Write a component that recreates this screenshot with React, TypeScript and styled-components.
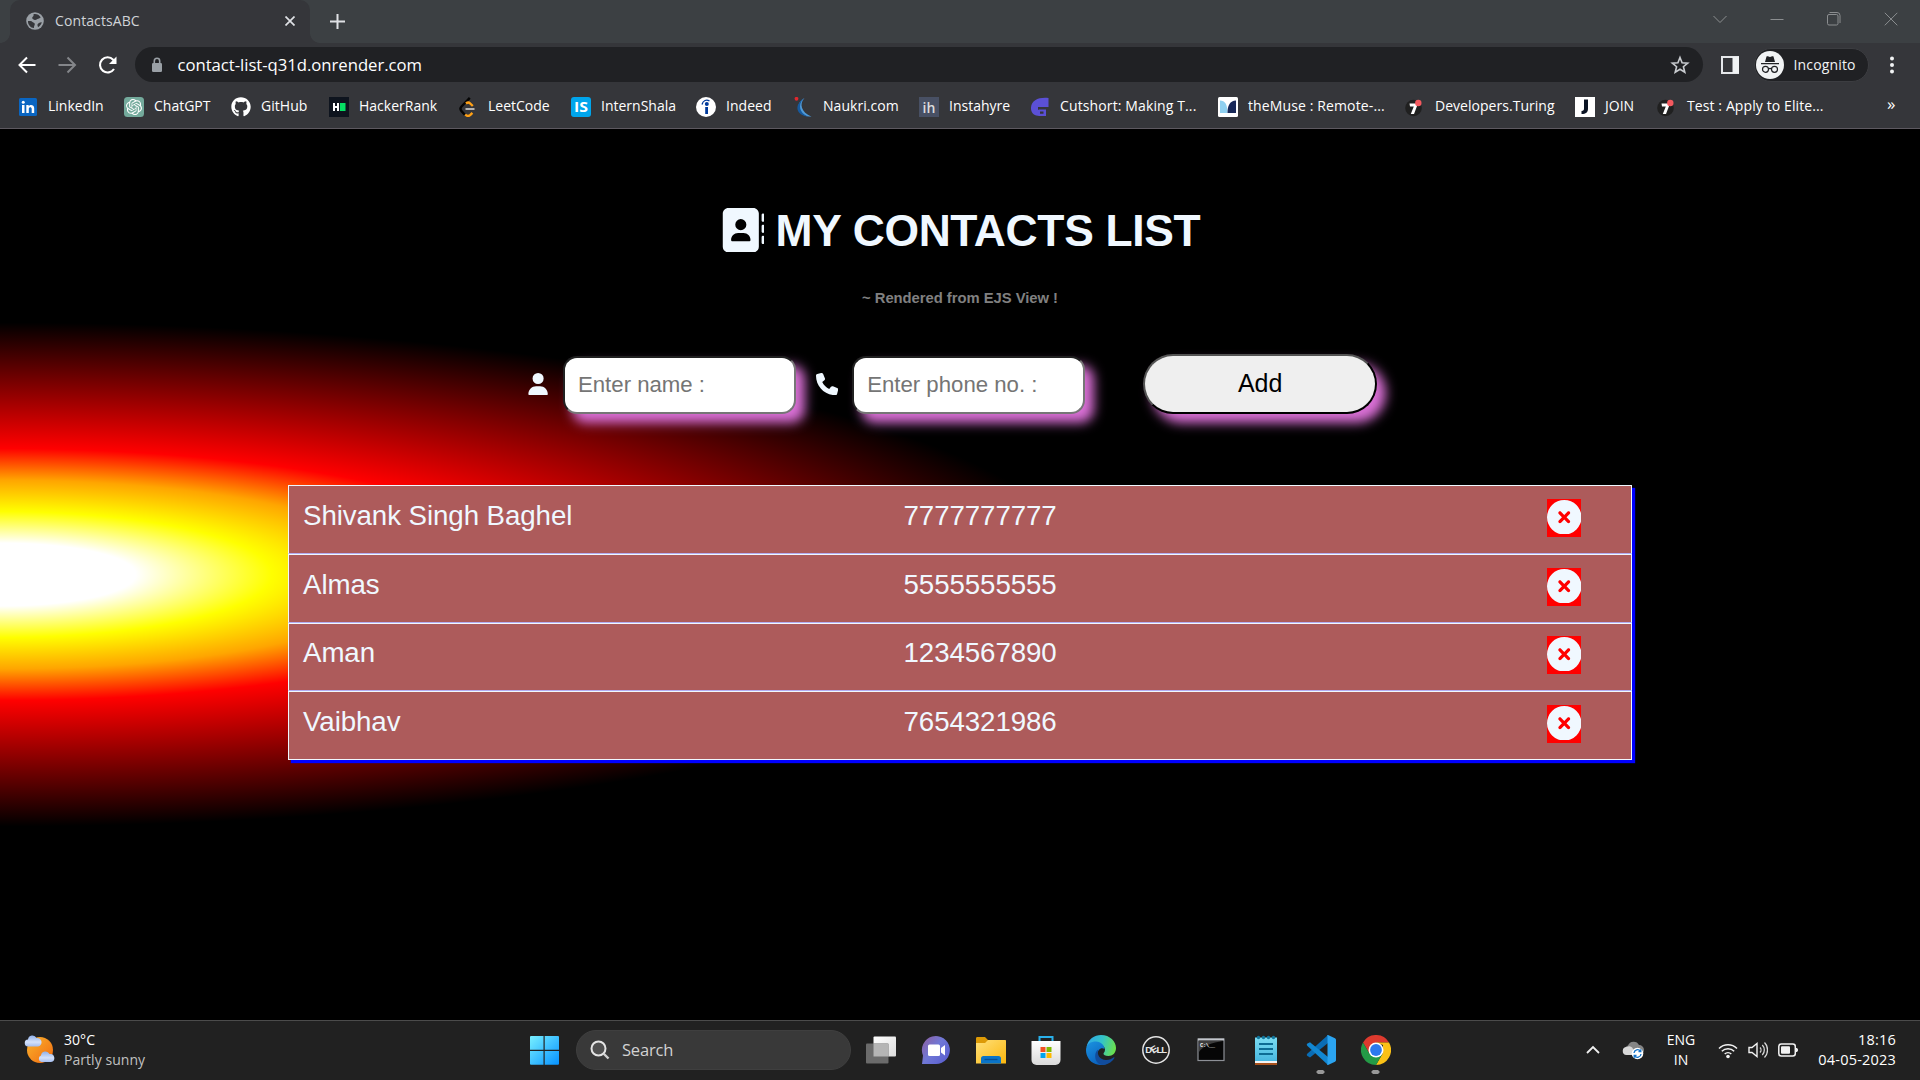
import React from "react";
import styled, { createGlobalStyle } from "styled-components";
import { FaAddressBook, FaUser, FaPhone, FaCircleXmark } from "react-icons/fa6";
import { FaGithub } from "react-icons/fa";
import { SiOpenai } from "react-icons/si";

const UI_FONT = '"Open Sans", "Noto Sans", sans-serif';
const PAGE_FONT = '"Liberation Sans", Arial, sans-serif';

const GlobalStyle = createGlobalStyle`
  * { box-sizing: border-box; }
  html, body { margin: 0; padding: 0; background: #000; overflow: hidden; }
  svg { display: block; flex: none; }
`;

const Screen = styled.div`
  width: 1920px;
  height: 1080px;
  display: flex;
  flex-direction: column;
  overflow: hidden;
  font-family: ${UI_FONT};
`;

/* ---------- browser chrome ---------- */

const TabStrip = styled.header`
  height: 43px;
  flex: none;
  display: flex;
  align-items: flex-start;
  background: #3c4043;
`;

const Flare = styled.div<{ $side: "left" | "right" }>`
  width: 10px;
  height: 43px;
  background: radial-gradient(circle at ${(p) => (p.$side === "left" ? "0 0" : "10px 0")}, #3c4043 9.5px, #35363a 10.2px)
    no-repeat 0 33px / 10px 10px;
`;

const Tab = styled.div`
  width: 300px;
  height: 43px;
  display: flex;
  align-items: center;
  padding: 0 15px 1px 16px;
  border-radius: 10px 10px 0 0;
  background: #35363a;
`;

const TabTitle = styled.span`
  flex: 1;
  margin-left: 11px;
  color: #d0d3d7;
  font-size: 14px;
  letter-spacing: 0.1px;
  line-height: 20px;
`;

const NewTab = styled.div`
  margin: 14px 0 0 10px;
`;

const WindowControls = styled.div`
  height: 37px;
  margin-left: auto;
  padding-right: 22px;
  display: flex;
  align-items: center;
  gap: 43px;
`;

const Toolbar = styled.div`
  height: 43px;
  flex: none;
  display: flex;
  align-items: center;
  padding: 0 20px 0 17px;
  background: #35363a;
`;

const NavButtons = styled.div`
  width: 118px;
  display: flex;
  gap: 20px;
`;

const AddressBar = styled.div`
  width: 1568px;
  height: 35px;
  display: flex;
  align-items: center;
  padding: 0 13px 0 16px;
  border-radius: 18px;
  background: #202124;
`;

const Url = styled.span`
  flex: 1;
  padding-top: 1px;
  margin-left: 14.5px;
  color: #fff;
  font-size: 16.7px;
  letter-spacing: -0.03px;
  line-height: 24px;
`;

const PanelButton = styled.div`
  margin: 0 15px 0 18px;
`;

const IncognitoChip = styled.div`
  width: 115px;
  height: 34px;
  display: flex;
  align-items: center;
  padding-left: 1px;
  border: 1px solid #3c3d41;
  border-radius: 17px;
  background: #202124;
  color: #f1f3f4;
  font-size: 14px;
  letter-spacing: 0.15px;
  span { margin-left: 9.5px; line-height: 20px; }
`;

const MenuButton = styled.div`
  margin-left: 21px;
`;

const BookmarksBar = styled.nav`
  height: 43px;
  flex: none;
  display: flex;
  align-items: center;
  padding: 0 0 1px 18px;
  border-bottom: 1px solid #5d5960;
  background: #35363a;
`;

const Bookmark = styled.div<{ $width: number }>`
  width: ${(p) => p.$width}px;
  flex: none;
  display: flex;
  align-items: center;
  white-space: nowrap;
`;

const BookmarkLabel = styled.span<{ $track: number }>`
  margin: 0 0 2px 10px;
  color: #fff;
  font-size: 14px;
  line-height: 20px;
  letter-spacing: ${(p) => p.$track}px;
`;

const Overflow = styled.span`
  color: #fff;
  font-size: 17px;
  line-height: 20px;
  margin: -6px 0 0 1px;
`;

/* ---------- contacts page ---------- */

const Page = styled.main`
  height: 891px;
  flex: none;
  display: flex;
  flex-direction: column;
  align-items: center;
  padding-top: 77px;
  font-family: ${PAGE_FONT};
  color: aliceblue;
  background: radial-gradient(at left, white 5%, yellow 10%, orange 15%, red 20%, black 40%);
`;

const Title = styled.h1`
  margin: 0;
  display: flex;
  align-items: center;
  gap: 11.5px;
  font-size: 44.4px;
  line-height: 50px;
  font-weight: bold;
  white-space: nowrap;
  letter-spacing: -0.32px;
  svg { margin-bottom: 2px; }
`;

const Subtitle = styled.h5`
  margin: 32px 0 0;
  font-size: 14.8px;
  line-height: 20px;
  letter-spacing: -0.03px;
  color: gray;
`;

const Form = styled.form`
  width: 1920px;
  height: 60px;
  margin: 46px 0 0;
  padding-left: 527.3px;
  display: flex;
  align-items: flex-end;
`;

const FieldIcon = styled.span<{ $gap: number; $before?: number }>`
  display: flex;
  margin: 0 ${(p) => p.$gap}px 19px ${(p) => p.$before ?? 0}px;
  font-size: 22.2px;
`;

const Field = styled.input`
  width: 233px;
  height: 58px;
  margin: 0;
  padding: 0 13px;
  border: 2px inset rgb(118, 118, 118);
  border-radius: 14px;
  background: #fff;
  font: 22.2px ${PAGE_FONT};
  box-shadow: 9px 9px 12px orchid;
  &::placeholder { color: #757575; opacity: 1; }
`;

const AddButton = styled.button`
  width: 234px;
  height: 60px;
  margin: 0 0 0 58px;
  padding: 0 0 2px;
  border: 2px outset black;
  border-radius: 30px;
  background: #efefef;
  color: #000;
  font: 25px ${PAGE_FONT};
  box-shadow: 9px 9px 12px orchid;
`;

const List = styled.ul`
  width: 1344px;
  margin: 71px 0 0;
  padding: 0;
  list-style: none;
  box-shadow: 3px 3px 1px blue;
`;

const Row = styled.li<{ $height: number }>`
  height: ${(p) => p.$height}px;
  display: flex;
  align-items: flex-start;
  padding: ${(p) => p.$height - 56}px 50px 0 14px;
  border: 1px solid aliceblue;
  border-bottom-color: #b3adf2;
  background: #ad5b5b;
  font-size: 27.7px;
  letter-spacing: -0.08px;
  line-height: 34px;
  &:last-child { border-bottom-color: aliceblue; }
`;

const Name = styled.span`
  width: 600.5px;
`;

const Remove = styled.button`
  width: 34px;
  height: 38px;
  margin: 0 0 0 auto;
  padding: 0 0 2px;
  border: 0;
  display: flex;
  align-items: center;
  justify-content: center;
  background: red;
  color: aliceblue;
  font-size: 34.5px;
`;

/* ---------- taskbar ---------- */

const Taskbar = styled.footer`
  height: 60px;
  flex: none;
  display: flex;
  align-items: center;
  padding-bottom: 2px;
  border-top: 1px solid #4b4b4b;
  background: #212121;
  color: #fff;
  font-size: 14px;
  line-height: 20px;
`;

const Weather = styled.div`
  width: 505px;
  padding-left: 24px;
  display: flex;
  align-items: center;
  gap: 9px;
  letter-spacing: 0.05px;
  svg { margin-bottom: 1px; }
`;

const Muted = styled.div`
  color: #c0c0c0;
`;

const AppRow = styled.div`
  width: 1079px;
  display: flex;
  align-items: center;
  padding-left: 24px;
`;

const SearchBox = styled.div`
  width: 275px;
  height: 40px;
  margin: 0 2px 0 17px;
  padding: 0 0 0 13px;
  display: flex;
  align-items: center;
  border: 1px solid #3f3f3f;
  border-radius: 20px;
  background: #393939;
  color: #d2d2d2;
  font-size: 16.5px;
  gap: 12px;
  letter-spacing: -0.2px;
  span { padding-top: 1px; }
`;

const AppSlot = styled.div<{ $open?: boolean }>`
  width: 55px;
  height: 58px;
  display: flex;
  justify-content: center;
  align-items: center;
  background: ${(p) => (p.$open ? "radial-gradient(ellipse 4.5px 2.5px at 50% 51px, #989898 80%, transparent 100%)" : "none")};
`;

const Tray = styled.div`
  flex: 1;
  display: flex;
  align-items: center;
  padding-right: 24px;
`;

const TraySpacer = styled.div`
  width: 20px;
`;

const Language = styled.div`
  width: 36px;
  margin: 0 19px 0 19px;
  text-align: center;
`;

const Clock = styled.div`
  margin-left: auto;
  text-align: right;
  font-size: 14.5px;
  letter-spacing: 0.2px;
`;

const SystemIcons = styled.div`
  display: flex;
  align-items: center;
  gap: 10px;
`;

/* ---------- drawings ---------- */

const Svg = ({ w, h = w, vb, children }: { w: number; h?: number; vb?: string; children: React.ReactNode }) => (
  <svg width={w} height={h} viewBox={vb ?? `0 0 ${w} ${h}`} fill="none">{children}</svg>
);

const Globe = () => (
  <Svg w={18}>
    <circle cx="9" cy="9" r="8.8" fill="#9aa0a6" />
    <path d="M2 9c1.500.2 3.500-.2 4.500 1 .8 1 2.300.6 2.300 2.200 0 1.300-1 1.500-.8 3.900C4.500 15.800 1.800 12.800 2 9Z" fill="#35363a" />
    <path d="M7.500 2.200c2.800-.6 5.600.5 7.300 3.300-1.300 0-1.300 1.300-2.500 1.300-1.500 0-2 1.700-3.600 1.200C7.200 7.500 5.800 6.500 6.300 5.200 6.700 4.200 8 4.200 7.500 2.200ZM11.500 12.500c.5-1.500 2.500-2.500 4.300-2.300-.5 2-1.800 3.900-3.800 5 0-1-.8-1.700-.5-2.700Z" fill="#35363a" />
  </Svg>
);

const Turing = () => (
  <Svg w={20}>
    <circle cx="8.500" cy="11" r="8.300" fill="#202020" />
    <path d="M4.500 6.500h8.500L9 17H5.800L8.800 9.500H5Z" fill="#fff" />
    <circle cx="13.300" cy="6" r="3.200" fill="#f4595f" />
  </Svg>
);

const bookmarks: { label: string; width: number; track: number; icon: React.ReactNode }[] = [
  { label: "LinkedIn", width: 106, track: 0, icon: (
    <Svg w={20}><rect x="1" y="1" width="18" height="18" rx="1.500" fill="#0a66c2" />
      <path d="M4 8h2.500v8H4ZM8.300 8h2.400v1.200c1.500-2.200 5.500-1.500 5.500 2V16h-2.500v-4.200c0-2.200-2.900-2.200-2.900 0V16H8.300Z" fill="#fff" /><circle cx="5.250" cy="5.200" r="1.500" fill="#fff" /></Svg>) },
  { label: "ChatGPT", width: 107, track: 0, icon: (
    <svg width="20" height="20" viewBox="0 0 20 20"><rect width="20" height="20" rx="3.500" fill="#74aa9c" /><SiOpenai x="2" y="2" size={16} color="#fff" /></svg>) },
  { label: "GitHub", width: 98, track: 0.05, icon: <FaGithub size={20} color="#fff" /> },
  { label: "HackerRank", width: 129, track: 0, icon: (
    <Svg w={20}><rect width="20" height="20" fill="#0e141e" /><path d="M4 6h2v3h2V6h2v8H8v-3H6v3H4Z" fill="#fff" /><rect x="11" y="6" width="5.500" height="8" fill="#05e064" /></Svg>) },
  { label: "LeetCode", width: 113, track: 0, icon: (
    <Svg w={20}><path d="M11.800.8 3.500 9.500c-1.300 1.400-1.300 3.200 0 4.600L7 18" stroke="#050505" strokeWidth="2.400" />
      <path d="M8 6.500c1.500-1.200 3-1.200 4.200 0l2.600 2.500M7.200 17.500c1.800 1.800 3.600 1.800 5.200.3l2-2" stroke="#ffa116" strokeWidth="2.400" /><path d="M7.500 12h9" stroke="#b3b3b3" strokeWidth="2" /></Svg>) },
  { label: "InternShala", width: 125, track: 0, icon: (
    <Svg w={20}><rect width="20" height="20" rx="3" fill="#00a5ec" /><text x="10" y="15.300" textAnchor="middle" fontFamily="Open Sans" fontWeight="700" fontSize="14" fill="#fff" textLength="14" lengthAdjust="spacingAndGlyphs">IS</text></Svg>) },
  { label: "Indeed", width: 97, track: 0.05, icon: (
    <Svg w={20}><circle cx="10" cy="10" r="10" fill="#fff" /><path d="M6 7.500C7 3.500 10.500 2 13.500 4" stroke="#003a9b" strokeWidth="1.300" /><circle cx="10.800" cy="7" r="2" fill="#003a9b" /><path d="M9.200 10h2.800v7H9.200Z" fill="#003a9b" /></Svg>) },
  { label: "Naukri.com", width: 126, track: 0.05, icon: (
    <Svg w={20}><path d="M11.500 1C6 7 8 15 18.500 19.800 5 19.500.5 8 11.500 1Z" fill="#4f9ad8" /><path d="M10.500 1.500C4.500 8 6.500 16 15 19.500 3.500 18.500.5 8.500 10.500 1.500Z" fill="#175a9e" /><circle cx="3.500" cy="1.800" r="1.900" fill="#e0282e" /></Svg>) },
  { label: "Instahyre", width: 111, track: 0, icon: (
    <Svg w={20}><rect width="20" height="20" fill="#485064" /><text x="10" y="15.800" textAnchor="middle" fontFamily="Open Sans" fontWeight="600" fontSize="14" fill="#dcdcdc" textLength="13">ih</text></Svg>) },
  { label: "Cutshort: Making T...", width: 188, track: 0.12, icon: (
    <Svg w={20}><path d="M18.500 1v9H8v3h2v5.500C4.500 20 .5 15.500 1 10.500 1.500 3 9 0 18.500 1ZM8.500 12.500h7.500V19H8.500v-2.200h5V14.500h-5Z" fill="#5b50d6" /></Svg>) },
  { label: "theMuse : Remote-...", width: 187, track: 0.12, icon: (
    <Svg w={20}><rect width="20" height="20" rx="1.500" fill="#fff" /><path d="M2 3.500c5 0 7.500 4 7.500 12.500H2Z" fill="#8fd0f0" /><path d="M18 3.500V16H9.500C9.500 8 12 4 18 3.500Z" fill="#182858" /></Svg>) },
  { label: "Developers.Turing", width: 170, track: 0.03, icon: <Turing /> },
  { label: "JOIN", width: 82, track: 0, icon: (
    <Svg w={20}><rect width="20" height="20" fill="#fff" /><path d="M9 2.500h4v9c0 4-2 5.500-6.500 5.500V14c2 0 2.500-1 2.500-2.500Z" fill="#0b1424" /></Svg>) },
  { label: "Test : Apply to Elite...", width: 229, track: 0.1, icon: <Turing /> },
];

const contacts = [
  { name: "Shivank Singh Baghel", phone: "7777777777", height: 69 },
  { name: "Almas", phone: "5555555555", height: 69 },
  { name: "Aman", phone: "1234567890", height: 68 },
  { name: "Vaibhav", phone: "7654321986", height: 69 },
];

const WeatherIcon = () => (
  <Svg w={31} h={30}>
    <defs>
      <linearGradient id="sun" x1="0" y1="0" x2="1" y2="1"><stop stopColor="#f9b42d" /><stop offset="1" stopColor="#f26a10" /></linearGradient>
      <linearGradient id="cloud" x1="0" y1="0" x2="0" y2="1"><stop stopColor="#8fb0ea" /><stop offset="0.600" stopColor="#d5e2fb" /><stop offset="1" stopColor="#a4bdf0" /></linearGradient>
    </defs>
    <circle cx="16" cy="16" r="13" fill="url(#sun)" />
    <path d="M4.500 12.500a3.500 3.500 0 0 1-.5-7 4.500 4.500 0 0 1 8.500-1.500 4.200 4.200 0 0 1 1.500 8.500Z" fill="url(#cloud)" />
    <path d="M17.500 28a3.400 3.400 0 0 1-.5-6.500 4.500 4.500 0 0 1 8.500-1.500 4 4 0 0 1 1.500 8Z" fill="url(#cloud)" />
  </Svg>
);

const StartIcon = () => (
  <Svg w={30}>
    <defs><linearGradient id="win" x1="0" y1="0" x2="30" y2="30" gradientUnits="userSpaceOnUse"><stop stopColor="#7cf3ff" /><stop offset="1" stopColor="#0591ff" /></linearGradient></defs>
    <path d="M1 2a1 1 0 0 1 1-1h12.500v13.800H1ZM15.700 1H29a1 1 0 0 1 1 1v12.800H15.700ZM1 16h13.500v13.800H2a1 1 0 0 1-1-1ZM15.700 16H30v12.800a1 1 0 0 1-1 1H15.700Z" fill="url(#win)" />
  </Svg>
);

const taskIcons: { name: string; open?: boolean; icon: React.ReactNode }[] = [
  { name: "task view", icon: (
    <Svg w={30}>
      <defs><linearGradient id="tv" x1="0" y1="0" x2="1" y2="1"><stop stopColor="#fff" /><stop offset="1" stopColor="#dcdcdc" /></linearGradient></defs>
      <rect x="7.500" y="1.500" width="22.500" height="20" rx="1" fill="url(#tv)" /><rect x="0" y="8.500" width="22.500" height="20" rx="1" fill="#6b6b6b" /><path d="M7.500 8.500h15v13h-15Z" fill="#b5b5b5" />
    </Svg>) },
  { name: "chat", icon: (
    <Svg w={30}>
      <defs><linearGradient id="chat" x1="0" y1="0" x2="1" y2="0.800"><stop offset="0.100" stopColor="#8a62a8" /><stop offset="0.500" stopColor="#7078d6" /><stop offset="1" stopColor="#5a5fd0" /></linearGradient></defs>
      <path d="M1 29l1-8.500A14 14 0 1 1 15 29Z" fill="url(#chat)" /><rect x="7" y="9.500" width="12" height="11.500" rx="1.500" fill="#fff" /><path d="M20 13l4-3v10.500l-4-3Z" fill="#fff" />
    </Svg>) },
  { name: "explorer", icon: (
    <Svg w={30}>
      <defs><linearGradient id="folder" x1="0" y1="0" x2="1" y2="1"><stop stopColor="#ffe07a" /><stop offset="1" stopColor="#fbb70d" /></linearGradient></defs>
      <path d="M0 3.500C0 2.500.5 2 1.500 2H9l3 3h16c1.200 0 2 .5 2 1.500V12H0Z" fill="#dd9a06" /><path d="M0 8h9l3-3h17a1 1 0 0 1 1 1v22.500H0Z" fill="url(#folder)" /><path d="M5 28.500v-5a2.500 2.500 0 0 1 2.500-2.500h15a2.500 2.500 0 0 1 2.500 2.500v5Z" fill="#0a74c8" /><path d="M8.500 24.500h13" stroke="#064f96" strokeWidth="1.300" />
    </Svg>) },
  { name: "store", icon: (
    <Svg w={30}>
      <defs><linearGradient id="store" x1="0" y1="0" x2="0" y2="1"><stop stopColor="#fff" /><stop offset="1" stopColor="#dadada" /></linearGradient></defs>
      <path d="M8.500 7V2h13v5" stroke="#29b0ea" strokeWidth="2" /><path d="M.5 6h29v19a5 5 0 0 1-5 5h-19a5 5 0 0 1-5-5Z" fill="url(#store)" /><path d="M9.500 12h5v5h-5Z" fill="#f25022" /><path d="M15.500 12h5v5h-5Z" fill="#7fba00" /><path d="M9.500 18h5v5h-5Z" fill="#00a4ef" /><path d="M15.500 18h5v5h-5Z" fill="#ffb900" />
    </Svg>) },
  { name: "edge", icon: (
    <Svg w={30}>
      <defs>
        <linearGradient id="e1" x1="0" y1="0.300" x2="1" y2="0.500"><stop stopColor="#2fa8e8" /><stop offset="0.500" stopColor="#33c3c8" /><stop offset="1" stopColor="#6be04c" /></linearGradient>
        <linearGradient id="e2" x1="0" y1="0" x2="0.600" y2="1"><stop stopColor="#1b93e0" /><stop offset="1" stopColor="#0a60bd" /></linearGradient>
      </defs>
      <path d="M.5 12C2 4 8.500 0 15 0c9 0 15 6.500 15 13 0 5-3.500 8-7.500 8-3.500 0-5-1.200-5-2.200 0-1.100 1.500-1.600 1.500-4.300C19 9 6 5 .5 12Z" fill="url(#e1)" />
      <path d="M0 15C0 9 5 6.500 10 6.500s8.500 4 8.500 7.500c-4-3-9.500 3-6 9.500 2 3.500 5.500 6 9 5C17 31 12 30 9.500 29 4 27 0 21.500 0 15Z" fill="url(#e2)" />
      <path d="M12.200 14.500C10.500 19.500 14 25 20 25c3.500 0 6-1.500 7.500-2.500.8-.4 1.200.2.8.8C25 28 21 30 16.500 30 8 29 7.500 17.500 12.200 14.500Z" fill="#114c9c" />
    </Svg>) },
  { name: "dell", icon: (
    <Svg w={30}>
      <circle cx="15" cy="15" r="13.200" stroke="#e4e4e4" strokeWidth="1.500" />
      <g fontFamily="Liberation Sans" fontWeight="700" fontSize="9.500" fill="#e8e8e8">
        <text x="4.300" y="18.400">D</text><text x="10.500" y="17.500" transform="rotate(-32 13.500 15)">E</text><text x="15.600" y="18.400">L</text><text x="20.200" y="18.400">L</text>
      </g>
    </Svg>) },
  { name: "terminal", icon: (
    <Svg w={30}><rect x="2" y="4" width="26" height="21.500" fill="#060606" stroke="#8d9096" strokeWidth="1.200" /><path d="M2 4.500h26" stroke="#c3c6cc" strokeWidth="2" /><path d="M3 6h24C16 7.500 7 11 3 17Z" fill="#3d3d3d" /><text x="4" y="11.500" fontFamily="Liberation Mono" fontWeight="700" fontSize="5.500" fill="#f2f2f2" textLength="15">C:\__</text></Svg>) },
  { name: "notepad", icon: (
    <Svg w={30}>
      <defs><linearGradient id="np" x1="0" y1="0" x2="0" y2="1"><stop stopColor="#7bdcf2" /><stop offset="1" stopColor="#48b8e0" /></linearGradient></defs>
      <path d="M4 27h22v3H4Z" fill="#a8511c" /><path d="M4 25.500h22v2.500H4Z" fill="#f3f3f3" /><path d="M4 2.500h22V26H4Z" fill="url(#np)" /><path d="M8 9h14M8 14h14M8 19h14" stroke="#0d6c94" strokeWidth="2" />
      <g fill="#13789e"><circle cx="7.500" cy="2.500" r="1.700" /><circle cx="12.500" cy="2.500" r="1.700" /><circle cx="17.500" cy="2.500" r="1.700" /><circle cx="22.500" cy="2.500" r="1.700" /></g>
    </Svg>) },
  { name: "vscode", open: true, icon: (
    <Svg w={30}><path d="M22 0v8L4 22.500 1.500 21c-1-.7-1-1.500 0-2.500Z" fill="#0a6db5" /><path d="M22 30v-8L4 7.200 1.500 8.500c-1 .7-1 1.500 0 2.500Z" fill="#1287d2" /><path d="M22 0l7 3.300c.7.4 1 .8 1 1.500v20.400c0 .7-.3 1.100-1 1.500L22 30c-.8 0-1-.5-.5-1V1c-.5-.5-.3-1 .5-1Z" fill="#2ba4f0" /></Svg>) },
  { name: "chrome", open: true, icon: (
    <Svg w={30}>
      <path d="M2 7.500A15 15 0 0 1 28 7.500H15L8.500 18.750Z" fill="#dd3a2e" /><path d="M28 7.500A15 15 0 0 1 15 30l6.500-11.250L22 10 15 7.500Z" fill="#fbc116" /><path d="M2 7.500A15 15 0 0 0 15 30l6.500-11.250H8.500Z" fill="#249a46" />
      <circle cx="15" cy="15" r="7.500" fill="#fff" /><circle cx="15" cy="15" r="5.900" fill="#2c79ee" />
    </Svg>) },
];

export default function App() {
  return (
    <Screen>
      <GlobalStyle />
      <TabStrip>
        <Flare $side="left" />
        <Tab>
          <Globe />
          <TabTitle>ContactsABC</TabTitle>
          <Svg w={10}><path d="M.5.5l9 9M9.500.5l-9 9" stroke="#dfe1e5" strokeWidth="1.700" /></Svg>
        </Tab>
        <Flare $side="right" />
        <NewTab><Svg w={15}><path d="M7.500 0v15M0 7.500h15" stroke="#dfe1e5" strokeWidth="2" /></Svg></NewTab>
        <WindowControls>
          <Svg w={14}><path d="M.5 4l6.500 6.500L13.500 4" stroke="#8b8e90" /></Svg>
          <Svg w={14}><path d="M.5 7.500h13" stroke="#8b8e90" /></Svg>
          <Svg w={14}><rect x=".5" y="2.500" width="10.500" height="10.500" rx="1.500" stroke="#8b8e90" /><path d="M2.500.5h7.500a3 3 0 0 1 3 3v7.500" stroke="#8b8e90" /></Svg>
          <Svg w={14}><path d="M.8.8l12.500 12.500M13.300.8L.8 13.300" stroke="#8b8e90" /></Svg>
        </WindowControls>
      </TabStrip>

      <Toolbar>
        <NavButtons>
          <Svg w={20}><path d="M18.500 10H3M10 2.500L2.500 10l7.500 7.500" stroke="#fff" strokeWidth="2" /></Svg>
          <Svg w={20}><path d="M1.500 10h16M10.500 2.500L18 10l-7.500 7.500" stroke="#84868a" strokeWidth="2" /></Svg>
          <Svg w={22} h={20}><path d="M17 14a7.600 7.600 0 1 1-.8-9.300L18.500 7" stroke="#fff" strokeWidth="2.100" /><path d="M19.500 1.500v7.500H12Z" fill="#fff" /></Svg>
        </NavButtons>
        <AddressBar>
          <Svg w={12} h={16}><rect x="1" y="6" width="10" height="9" rx="1.300" fill="#9aa0a6" /><path d="M3.300 7V4a2.700 2.700 0 0 1 5.400 0v3" stroke="#9aa0a6" strokeWidth="1.600" /></Svg>
          <Url>contact-list-q31d.onrender.com</Url>
          <Svg w={20}><path d="M10 2.500l2.100 5.200 5.600.4-4.300 3.600 1.400 5.500L10 14.200l-4.800 3 1.400-5.500-4.300-3.600 5.600-.4Z" stroke="#c8cbcf" strokeWidth="1.600" /></Svg>
        </AddressBar>
        <PanelButton><Svg w={18}><path d="M1 1h16v16H1Z" stroke="#e6e8eb" strokeWidth="2" /><path d="M11.500 1H18v16h-6.500Z" fill="#f1f3f4" /></Svg></PanelButton>
        <IncognitoChip>
          <Svg w={28}>
            <circle cx="14" cy="14" r="14" fill="#f1f3f4" />
            <path d="M10.500 5.500c1.500-.5 2 .5 3.500.5s2-1 3.500-.5L19 11H9ZM5 12h18v1.200H5Z" fill="#202124" />
            <circle cx="9.500" cy="18.300" r="3" stroke="#202124" strokeWidth="1.200" /><circle cx="18.500" cy="18.300" r="3" stroke="#202124" strokeWidth="1.200" /><path d="M12.500 18c1-.8 2-.8 3 0" stroke="#202124" strokeWidth="1.200" />
          </Svg>
          <span>Incognito</span>
        </IncognitoChip>
        <MenuButton><Svg w={4} h={18}><circle cx="2" cy="2.500" r="2" fill="#f1f3f4" /><circle cx="2" cy="9" r="2" fill="#f1f3f4" /><circle cx="2" cy="15.500" r="2" fill="#f1f3f4" /></Svg></MenuButton>
      </Toolbar>

      <BookmarksBar>
        {bookmarks.map((b) => (
          <Bookmark key={b.label} $width={b.width}>
            {b.icon}
            <BookmarkLabel $track={b.track}>{b.label}</BookmarkLabel>
          </Bookmark>
        ))}
        <Overflow>»</Overflow>
      </BookmarksBar>

      <Page>
        <Title><FaAddressBook /><span>MY CONTACTS LIST</span></Title>
        <Subtitle>~ Rendered from EJS View !</Subtitle>
        <Form onSubmit={(e) => e.preventDefault()}>
          <FieldIcon $gap={13.5}><FaUser /></FieldIcon>
          <Field placeholder="Enter name :" />
          <FieldIcon $gap={14} $before={20}><FaPhone /></FieldIcon>
          <Field placeholder="Enter phone no. :" />
          <AddButton type="submit">Add</AddButton>
        </Form>
        <List>
          {contacts.map((c) => (
            <Row key={c.name} $height={c.height}>
              <Name>{c.name}</Name>
              <span>{c.phone}</span>
              <Remove type="button"><FaCircleXmark color="aliceblue" /></Remove>
            </Row>
          ))}
        </List>
      </Page>

      <Taskbar>
        <Weather>
          <WeatherIcon />
          <div>
            <div>30°C</div>
            <Muted>Partly sunny</Muted>
          </div>
        </Weather>
        <AppRow>
          <StartIcon />
          <SearchBox>
            <Svg w={20}><circle cx="8.500" cy="8.500" r="7" stroke="#e4e4e4" strokeWidth="2" fill="#505050" /><path d="M13.500 13.500l5 5" stroke="#cfcfcf" strokeWidth="2.400" /></Svg>
            <span>Search</span>
          </SearchBox>
          {taskIcons.map((t) => (
            <AppSlot key={t.name} $open={t.open}>{t.icon}</AppSlot>
          ))}
        </AppRow>
        <Tray>
          <Svg w={18} h={12}><path d="M3 9l6-6 6 6" stroke="#f0f0f0" strokeWidth="1.800" /></Svg>
          <TraySpacer />
          <Svg w={22} h={20}>
            <path d="M6 15a5 5 0 0 1 0-9.500A6 6 0 0 1 17 5a4 4 0 0 1 0 10Z" fill="#858585" /><path d="M4.500 15A4 4 0 0 1 5 7c2-1.500 5-.5 6 2l2 6Z" fill="#d8d8d8" />
            <circle cx="15.500" cy="13.500" r="5.800" fill="#fff" /><path d="M12 13a3.600 3.600 0 0 1 6.500-1.800M19 14a3.600 3.600 0 0 1-6.500 1.800M18.800 9.200v2.300h-2.300M12.200 17.800v-2.300h2.300" stroke="#1473c8" strokeWidth="1.300" />
          </Svg>
          <Language>ENG<br />IN</Language>
          <SystemIcons>
            <Svg w={20} h={18}><path d="M1 7.500a12.800 12.800 0 0 1 18 0M3.800 10.300a8.800 8.800 0 0 1 12.400 0M6.700 13a4.700 4.700 0 0 1 6.600 0" stroke="#f2f2f2" strokeWidth="1.500" /><circle cx="10" cy="15.500" r="1.800" fill="#f2f2f2" /></Svg>
            <Svg w={20} h={18}><path d="M1 6.500h3L9 2.500v13L4 11.500H1Z" stroke="#f2f2f2" strokeWidth="1.400" /><path d="M12 6.500c1.300 1.300 1.300 3.700 0 5M14.300 4c2.700 2.700 2.700 7.300 0 10M16.500 1.500c4 4 4 11 0 15" stroke="#d8d8d8" strokeWidth="1.300" /></Svg>
            <Svg w={20} h={18}><rect x=".8" y="3" width="16.500" height="12" rx="2.500" stroke="#f2f2f2" strokeWidth="1.500" /><rect x="3" y="5.200" width="9" height="7.600" rx="1" fill="#f2f2f2" /><path d="M18 7v4c1.200 0 2-.5 2-2s-.8-2-2-2Z" fill="#f2f2f2" /></Svg>
          </SystemIcons>
          <Clock>18:16<br />04-05-2023</Clock>
        </Tray>
      </Taskbar>
    </Screen>
  );
}
